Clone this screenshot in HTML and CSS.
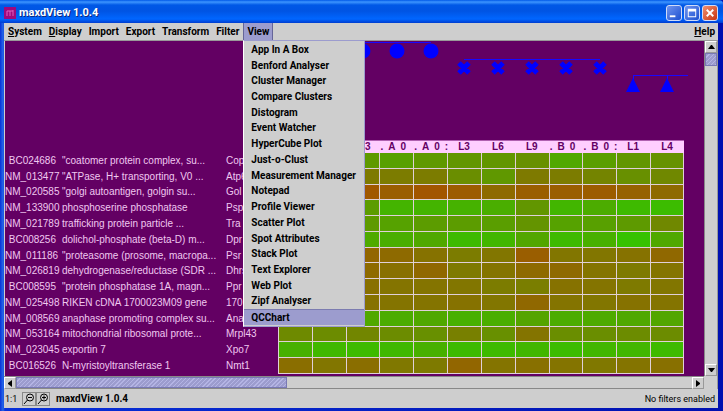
FILE: index.html
```
<!DOCTYPE html>
<html lang="en">
<head>
<meta charset="utf-8">
<title>maxdView 1.0.4</title>
<link rel="stylesheet" href="styles.css">
</head>
<body>
<div class="window">
  <header class="titlebar">
    <svg class="logo" viewBox="0 0 12 12" aria-hidden="true"><rect width="12" height="12" fill="#a0087c"/><path d="M3 9V4M6 9V4M9 9V3M3 4h6" stroke="#e060c0" fill="none"/></svg>
    <h1>maxdView 1.0.4</h1>
    <div class="controls">
      <button class="ctl" aria-label="Minimize"><svg viewBox="0 0 15 15"><path d="M3 10h6v2H3z" fill="#fff"/></svg></button>
      <button class="ctl" aria-label="Maximize"><svg viewBox="0 0 15 15"><path d="M3 3h9v9H3zM4 6v5h7V6z" fill="#fff" fill-rule="evenodd"/></svg></button>
      <button class="ctl close" aria-label="Close"><svg viewBox="0 0 15 15"><path d="M4 4l7 7M11 4l-7 7" stroke="#fff" stroke-width="2"/></svg></button>
    </div>
  </header>
  <nav class="menubar">
    <button><u>S</u>ystem</button>
    <button><u>D</u>isplay</button>
    <button>Import</button>
    <button>Export</button>
    <button>Transform</button>
    <button>Filter</button>
    <div class="view">
      <button class="open">View</button>
      <div class="menu">
        <button>App In A Box</button>
        <button>Benford Analyser</button>
        <button>Cluster Manager</button>
        <button>Compare Clusters</button>
        <button>Distogram</button>
        <button>Event Watcher</button>
        <button>HyperCube Plot</button>
        <button>Just-o-Clust</button>
        <button>Measurement Manager</button>
        <button>Notepad</button>
        <button>Profile Viewer</button>
        <button>Scatter Plot</button>
        <button>Spot Attributes</button>
        <button>Stack Plot</button>
        <button>Text Explorer</button>
        <button>Web Plot</button>
        <button>Zipf Analyser</button>
        <button class="active">QCChart</button>
      </div>
    </div>
    <button class="help"><u>H</u>elp</button>
  </nav>
  <main class="workspace">
    <div class="canvas">
      <svg class="tree" width="684" height="99" fill="#0000ff" stroke="none" aria-hidden="true">
        <path d="M358 1.500H426M459 18.500H595M628 34.500H683M628.500 34v5M662.500 34v5" stroke="#1808ff"/>
        <circle cx="358" cy="10" r="7.500"/><circle cx="392" cy="10" r="7.500"/><circle cx="426" cy="10" r="7.500"/>
        <path d="M454 22l10 10M464 22l-10 10M488 22l10 10M498 22l-10 10M522 22l10 10M532 22l-10 10M556 22l10 10M566 22l-10 10M590 22l10 10M600 22l-10 10" stroke="#0000ff" stroke-width="5"/>
        <path d="M628 37l7 14h-14zM662 37l7 14h-14z"/>
      </svg>
      <table>
        <colgroup><col class="c-id"><col class="c-desc"><col class="c-name"></colgroup>
        <thead><tr><td></td><td></td><td></td><th></th><th></th><th class="tail">3</th><th class="cut">.&ensp;A&ensp;0</th><th class="cut">.&ensp;A&ensp;0&ensp;:</th><th>L3</th><th>L6</th><th>L9</th><th class="cut">.&ensp;B&ensp;0</th><th class="cut">.&ensp;B&ensp;0&ensp;:</th><th>L1</th><th>L4</th></tr></thead>
        <tbody id="rows"></tbody>
      </table>
    </div>
    <div class="vbar">
      <button class="arrow" aria-label="Scroll up"><svg viewBox="0 0 7 4"><path d="M0 4h7L4 0H3z"/></svg></button>
      <div class="thumb"></div>
      <button class="arrow end" aria-label="Scroll down"><svg viewBox="0 0 7 4"><path d="M0 0h7L4 4H3z"/></svg></button>
    </div>
    <div class="hbar">
      <button class="arrow" aria-label="Scroll left"><svg viewBox="0 0 4 7"><path d="M4 0v7L0 4V3z"/></svg></button>
      <div class="thumb"></div>
      <button class="arrow end" aria-label="Scroll right"><svg viewBox="0 0 4 7"><path d="M0 0v7l4-3V3z"/></svg></button>
    </div>
  </main>
  <footer class="status">
    <span class="ratio">1:1</span>
    <button class="zoom" aria-label="Zoom out"><svg viewBox="0 0 12 12"><circle cx="7" cy="4.500" r="3.500"/><path d="M5 4.500h4M4.500 7L1 11"/></svg></button>
    <button class="zoom" aria-label="Zoom in"><svg viewBox="0 0 12 12"><circle cx="7" cy="4.500" r="3.500"/><path d="M5 4.500h4M7 2.500v4M4.500 7L1 11"/></svg></button>
    <strong>maxdView 1.0.4</strong>
    <span class="filters">No filters enabled</span>
  </footer>
</div>
<script src="rows.js"></script>
</body>
</html>
```
FILE: rows.js
```
const rows = [
  ['BC024686', '"coatomer protein complex, su...', 'Cop', [95,95,95,88,95,98,98,104,80,90,98,102]],
  ['NM_013477', '"ATPase, H+ transporting, V0 ...', 'Atp6', [120,120,126,124,124,106,96,126,124,116,104,112]],
  ['NM_020585', '"golgi autoantigen, golgin su...', 'Gol', [155,155,160,154,162,156,142,154,154,156,150,142]],
  ['NM_133900', 'phosphoserine phosphatase', 'Psp', [80,80,92,68,68,70,74,98,66,76,62,60]],
  ['NM_021789', 'trafficking protein particle ...', 'Tra', [90,90,94,86,92,92,90,100,86,88,94,112]],
  ['BC008256', 'dolichol-phosphate (beta-D) m...', 'Dpr', [75,75,78,74,80,62,66,82,62,72,54,80]],
  ['NM_011186', '"proteasome (prosome, macropa...', 'Psr', [140,140,146,142,134,124,130,154,130,130,134,144]],
  ['NM_026819', 'dehydrogenase/reductase (SDR ...', 'Dhrs', [130,130,142,136,144,126,132,142,142,132,126,132]],
  ['BC008595', '"protein phosphatase 1A, magn...', 'Ppr', [130,130,136,132,132,130,124,122,134,132,126,130]],
  ['NM_025498', 'RIKEN cDNA 1700023M09 gene', '170', [130,130,134,132,132,134,130,144,132,130,134,132]],
  ['NM_008569', 'anaphase promoting complex su...', 'Ana', [80,80,80,76,80,72,74,84,76,78,80,82]],
  ['NM_053164', 'mitochondrial ribosomal prote...', 'Mrpl43', [110,108,114,108,104,120,104,132,106,106,108,108]],
  ['NM_023045', 'exportin 7', 'Xpo7', [72,64,62,64,72,62,62,66,60,66,66,62]],
  ['BC016526', 'N-myristoyltransferase 1', 'Nmt1', [138,130,138,128,126,146,132,136,132,128,132,136]]
];

const body = document.getElementById('rows');
for (const [id, desc, name, levels] of rows) {
  const tr = body.insertRow();
  for (const [cls, text] of [['id', id], ['desc', desc], ['name', name]]) {
    const td = tr.insertCell();
    td.className = cls;
    td.textContent = text;
  }
  for (const red of levels) {
    const td = tr.insertCell();
    td.className = 'heat';
    td.style.backgroundColor = `rgb(${red}, ${248 - red}, 0)`;
  }
}
```
FILE: styles.css
```
* { box-sizing: border-box; }
body { margin: 0; background: #0a3cc8; }
body, button { font-family: Roboto, "Liberation Sans", Arial, sans-serif; font-size: 10px; color: #000; }
button { margin: 0; padding: 0; border: 0; background: none; font-weight: bold; line-height: 14px; white-space: nowrap; }
svg { display: block; }

.window {
  display: flex;
  flex-direction: column;
  height: 100vh;
  padding: 0 5px 3px 4px;
  background: linear-gradient(90deg, #0831d9, #2468e8 3px, #0831d9 5px, #0010b0);
}

.titlebar {
  display: flex;
  align-items: center;
  height: 23px;
  margin: 0 -5px 0 -4px;
  padding: 2px 5px 0 4px;
  gap: 3px;
  border-radius: 0 4px 0 0;
  background: linear-gradient(#0058e8, #3d95ff 2px, #0058e6 5px, #0054e3 11px, #0066ff 19px, #003dd0);
}
.logo { width: 12px; height: 12px; }
h1 { margin: 0; font-size: 11px; line-height: 15px; color: #fff; text-shadow: 1px 1px #0a2a80; }
.controls { display: flex; gap: 2px; margin-left: auto; }
.ctl { width: 16px; height: 16px; border: 1px solid #d0dcf8; border-radius: 3px; background: linear-gradient(135deg, #7095f0, #1c50d0); }
.close { background: linear-gradient(135deg, #f09070, #c83410); }

.menubar {
  display: flex;
  height: 18px;
  padding-left: 1px;
  background: #cecece;
  border-bottom: 1px solid #999;
}
.menubar > button, .open { height: 17px; }
.menubar > button { padding: 0 4px 0 3px; }
.view { position: relative; }
.open { width: 30px; padding: 0 3px; background: #9c9cce; border-left: 1px solid #666699; border-right: 1px solid #666699; }
.menubar > .help { margin-left: auto; padding: 0 3px; }
.menu {
  position: absolute;
  z-index: 2;
  top: 17px;
  left: 0;
  display: grid;
  grid-auto-rows: 1fr;
  width: 122px;
  height: 287px;
  padding: 1px 0;
  background: #cecece;
  border: 1px solid #9c9cce;
  border-left-color: #fff;
}
.menu button { padding: 0 7px; text-align: left; }
.menu .active { background: #9c9cce; border-top: 1px solid #7c7cb0; }

.workspace {
  flex: 1;
  display: grid;
  grid-template-columns: 1fr 13px;
  grid-template-rows: 1fr 13px;
  min-height: 0;
  background: #cecece;
  border-right: 1px solid #999;
}
.canvas { overflow: hidden; background: #630063; border-left: 1px solid #cecece; }
table { table-layout: fixed; width: calc(100% - 20px); height: 234px; border-collapse: separate; border-spacing: 0; color: #f0c8f0; font-family: "Liberation Sans", Arial, sans-serif; }
.c-id { width: 51px; }
.c-desc { width: 170px; }
.c-name { width: 52px; }
td, th { padding: 0; line-height: 12px; white-space: nowrap; }
thead tr { height: 13px; }
th { background: #ffceff; color: #630063; border-top: 1px solid #b060b0; }
.cut { text-align: left; padding-left: 1px; }
.tail { text-align: right; padding-right: 9px; }
.id { text-align: right; }
.desc { padding-left: 6px; }
.heat { border-left: 1px solid #e0d0d8; border-bottom: 1px solid #e0d0d8; }
.heat:last-child { border-right: 1px solid #e0d0d8; }

.thumb { background: repeating-linear-gradient(135deg, #9c9cce 0 2px, #b4b4e4 2px 3px); border: 1px solid #7878b4; }
.arrow { display: grid; place-items: center; width: 12px; height: 12px; border: 1px solid #999; border-top-color: #fff; border-left-color: #fff; }
.vbar { display: flex; flex-direction: column; border-left: 1px solid #888; }
.vbar svg { width: 7px; height: 4px; }
.vbar .thumb { height: 13px; }
.hbar { display: flex; border: 1px solid #888; border-width: 1px 0; }
.hbar svg { width: 4px; height: 7px; }
.hbar .thumb { width: 271px; }
.end { margin-left: auto; }
.vbar .end { margin: auto 0 0; }

.status { display: flex; align-items: center; height: 19px; padding: 0 3px 0 1px; background: #cecece; }
.ratio, .filters { font-size: 9px; }
.ratio { width: 17px; }
.zoom { width: 14px; height: 14px; border: 1px solid #888; }
.zoom svg { fill: none; stroke: #000; }
.status strong { margin-left: 6px; }
.filters { margin-left: auto; }
```
